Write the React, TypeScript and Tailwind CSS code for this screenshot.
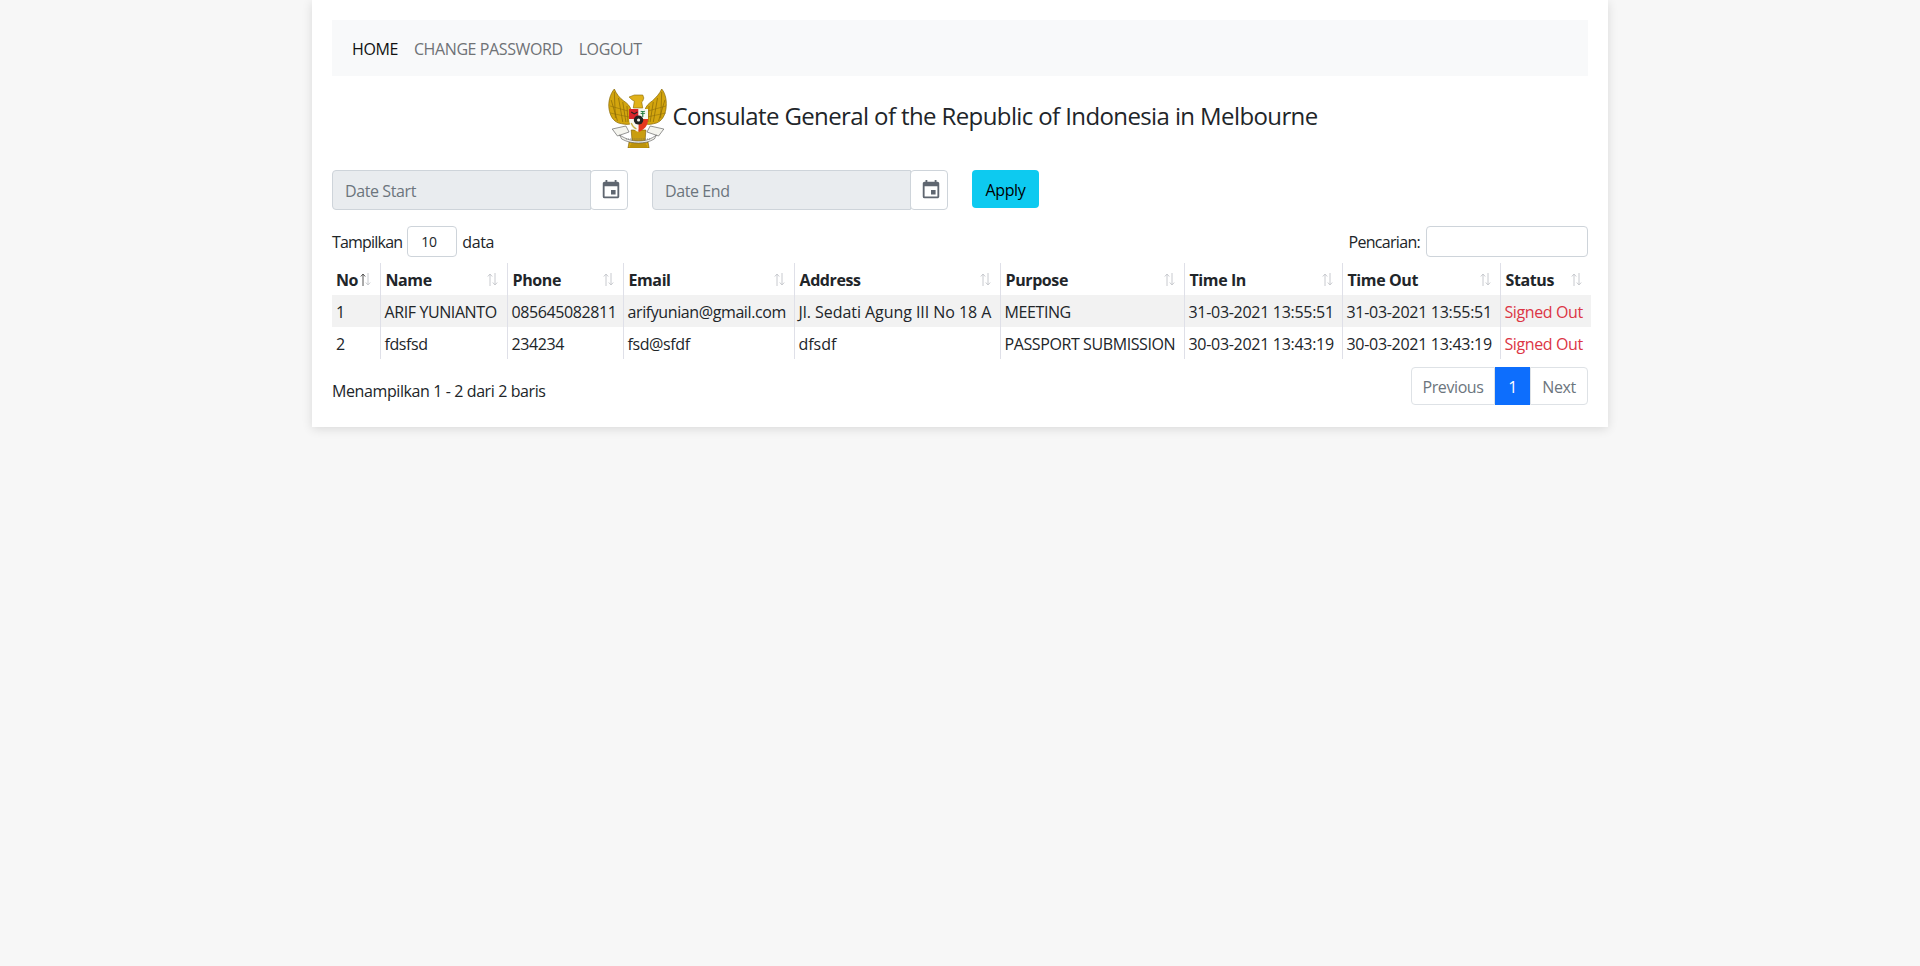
import { MdEvent } from "react-icons/md";

const columns = [
	{ label: "No", width: "w-[48px]", active: true },
	{ label: "Name", width: "w-[127px]" },
	{ label: "Phone", width: "w-[116px]" },
	{ label: "Email", width: "w-[171px]" },
	{ label: "Address", width: "w-[206px]" },
	{ label: "Purpose", width: "w-[184px]" },
	{ label: "Time In", width: "w-[158px]" },
	{ label: "Time Out", width: "w-[158px]" },
	{ label: "Status", width: "w-[91px]" },
];

const rows = [
	["1", "ARIF YUNIANTO", "085645082811", "arifyunian@gmail.com", "Jl. Sedati Agung III No 18 A", "MEETING", "31-03-2021 13:55:51", "31-03-2021 13:55:51"],
	["2", "fdsfsd", "234234", "fsd@sfdf", "dfsdf", "PASSPORT SUBMISSION", "30-03-2021 13:43:19", "30-03-2021 13:43:19"],
];

function Emblem() {
	return (
		<svg viewBox="0 0 56 60" preserveAspectRatio="none" className="h-[60px] w-[59px] shrink-0">
			{/* wings */}
			<path d="M6 1C2 6 0 14 1 21c1 7 4 12 9 14 4 1 8 2 11 1l1-14c-1-4-4-7-7-9C11 10 8 6 6 1z" fill="#d3a50e" stroke="#8a6a08" strokeWidth="0.7" />
			<path d="M51 1c4 5 5 13 4 20-1 7-4 12-9 14-4 1-7 2-10 1l-1-14c1-4 4-7 7-9 3-3 7-7 9-12z" fill="#d3a50e" stroke="#8a6a08" strokeWidth="0.7" />
			<path d="M6 4l1 26M3 12l6 21M10 10l4 24M14 14l3 20M18 18l1 16M51 4l-1 26M54 12l-6 21M47 10l-4 24M43 14l-3 20M39 18l-1 16" stroke="#8a6a08" strokeWidth="0.7" fill="none" />
			<path d="M2 18l17 5M2 25l18 4M55 18l-17 5M55 25l-18 4" stroke="#8a6a08" strokeWidth="0.5" fill="none" />
			{/* head */}
			<path d="M20 9l5-2h8l1 3-1 3-1 1 1 6H24l1-7-2-1z" fill="#e0b11a" stroke="#8a6a08" strokeWidth="0.6" />
			{/* legs and tail */}
			<path d="M22 42h14l-1 13H23z" fill="#c99d10" stroke="#7a5c05" strokeWidth="0.6" />
			<path d="M20 54h18l1 6H19z" fill="#d3a50e" stroke="#7a5c05" strokeWidth="0.6" />
			<path d="M22 56h14M21 58h16" stroke="#7a5c05" strokeWidth="0.5" />
			{/* shield */}
			<path d="M20 21h9v10h-9z" fill="#d8232a" />
			<path d="M29 21h9v10h-9z" fill="#f6f6f0" />
			<path d="M20 31h9v13c-5-2-9-6-9-13z" fill="#f6f6f0" />
			<path d="M29 31h9c0 7-4 11-9 13z" fill="#e4381f" />
			<path d="M33 23v6M31 25c1 1 3 1 4 0M31 23c1 1 3 1 4 0" stroke="#1e7a3a" strokeWidth="1" fill="none" />
			<path d="M22 24l3 2 3-2" stroke="#222" strokeWidth="1" fill="none" />
			<path d="M22 35c1 3 3 5 5 6" stroke="#c9b04a" strokeWidth="1.2" fill="none" />
			<circle cx="29" cy="32" r="4.5" fill="#222" />
			<circle cx="29" cy="32" r="1.5" fill="#f6f6f0" />
			{/* banner */}
			<path d="M4 41l13-3 3 6-11 4z" fill="#f4f4ee" stroke="#555" strokeWidth="0.6" />
			<path d="M53 41l-13-3-3 6 11 4z" fill="#f4f4ee" stroke="#555" strokeWidth="0.6" />
			<path d="M11 47c6 4 11 6 18 6s12-2 17-6l-2 4c-5 3-10 4-15 4s-11-1-16-4z" fill="#f4f4ee" stroke="#555" strokeWidth="0.6" />
			<path d="M17 51h23" stroke="#666" strokeWidth="0.7" strokeDasharray="1 1" />
		</svg>
	);
}

function SortArrows({ active }: { active?: boolean }) {
	return (
		<svg viewBox="0 0 11 13" className="absolute right-[9px] top-[10px] h-[13px] w-[11px]" fill="none" strokeWidth="1">
			<path d="M3 13V1M.8 3.5 3 1l2.2 2.5" stroke={active ? "#555" : "#c8cacf"} />
			<path d="M8 0v12M5.8 9.5 8 12l2.2-2.5" stroke="#c8cacf" />
		</svg>
	);
}

function DateInput({ placeholder }: { placeholder: string }) {
	return (
		<div className="flex h-[40px] w-[296px]">
			<div className="flex flex-1 items-center rounded-l-[4px] border border-[#ced4da] bg-[#e9ecef] pl-[12px] pt-[2px] text-[#6c757d]">
				{placeholder}
			</div>
			<div className="-ml-px flex w-[38px] items-center justify-center rounded-[4px] border border-[#ced4da] bg-white pl-[3px]">
				<MdEvent className="size-[22px] text-[#5f6670]" />
			</div>
		</div>
	);
}

export default function App() {
	return (
		<div className="min-h-[966px] bg-[#f7f7f7] font-['Open_Sans',sans-serif] text-[16px] tracking-[-0.4px] text-[#212529]">
			<div className="mx-auto h-[427px] w-[1296px] bg-white px-[20px] pt-[20px] shadow-[0_2px_10px_rgba(0,0,0,0.12)]">
				<nav className="flex h-[56px] items-center gap-[16px] bg-[#f8f9fa] pl-[20px] pt-[2px] text-[#6f7276]">
					<a className="text-[#111]">HOME</a>
					<a>CHANGE PASSWORD</a>
					<a>LOGOUT</a>
				</nav>

				<div className="mt-[12px] flex h-[60px] items-center justify-center gap-[5px] pl-[6px] text-[24px] tracking-[-0.61px]">
					<Emblem />
					<span className="-mt-[4px]">Consulate General of the Republic of Indonesia in Melbourne</span>
				</div>

				<div className="mt-[22px] flex h-[40px] items-start gap-[24px]">
					<DateInput placeholder="Date Start" />
					<DateInput placeholder="Date End" />
					<button className="h-[38px] w-[67px] rounded-[4px] bg-[#0dcaf0] pt-[2px] text-[#000]">Apply</button>
				</div>

				<div className="mt-[16px] flex h-[31px] items-center justify-between">
					<div className="flex items-center">
						<span className="tracking-[-0.8px]">Tampilkan</span>
						<span className="ml-[5px] flex h-[31px] w-[50px] items-center rounded-[4px] border border-[#ced4da] pl-[13px] text-[14px]">10</span>
						<span className="ml-[5px]">data</span>
					</div>
					<div className="flex items-center">
						<span className="tracking-[-0.7px]">Pencarian:</span>
						<span className="ml-[6px] h-[31px] w-[162px] rounded-[4px] border border-[#ced4da]" />
					</div>
				</div>

				<table className="mt-[6px] w-[1259px] table-fixed border-collapse">
					<thead>
						<tr className="h-[32px]">
							{columns.map((col) => (
								<th key={col.label} className={`relative ${col.width} border-l border-[#dfe0e8] pl-[5px] pr-[4px] pt-[2px] text-left font-bold first:border-l-0 first:pl-[4px]`}>
									{col.label}
									<SortArrows active={col.active} />
								</th>
							))}
						</tr>
					</thead>
					<tbody>
						{rows.map((row, i) => (
							<tr key={row[0]} className={i === 0 ? "h-[32px] bg-[#f2f2f2]" : "h-[32px]"}>
								{row.map((cell, j) => (
									<td
										key={j}
										className={`whitespace-nowrap border-l border-[#dfe0e8] pl-[4px] pr-[4px] pt-[2px] first:border-l-0 ${j === 4 ? "tracking-[-0.05px]" : ""} ${j > 5 ? "tracking-[-0.3px]" : ""}`}
									>
										{cell}
									</td>
								))}
								<td className="whitespace-nowrap border-l border-[#dfe0e8] pl-[4px] pr-[4px] pt-[2px] text-[#dc3545]">Signed Out</td>
							</tr>
						))}
					</tbody>
				</table>

				<div className="mt-[8px] flex items-start justify-between">
					<span className="mt-[12px]">Menampilkan 1 - 2 dari 2 baris</span>
					<div className="flex h-[38px] items-stretch text-[#6c757d]">
						<span className="flex w-[84px] items-center justify-center rounded-l-[4px] border border-[#dee2e6] pt-[2px]">Previous</span>
						<span className="flex w-[35px] items-center justify-center bg-[#0d6efd] pt-[2px] text-white">1</span>
						<span className="flex w-[58px] items-center justify-center rounded-r-[4px] border border-[#dee2e6] pt-[2px]">Next</span>
					</div>
				</div>
			</div>
		</div>
	);
}
